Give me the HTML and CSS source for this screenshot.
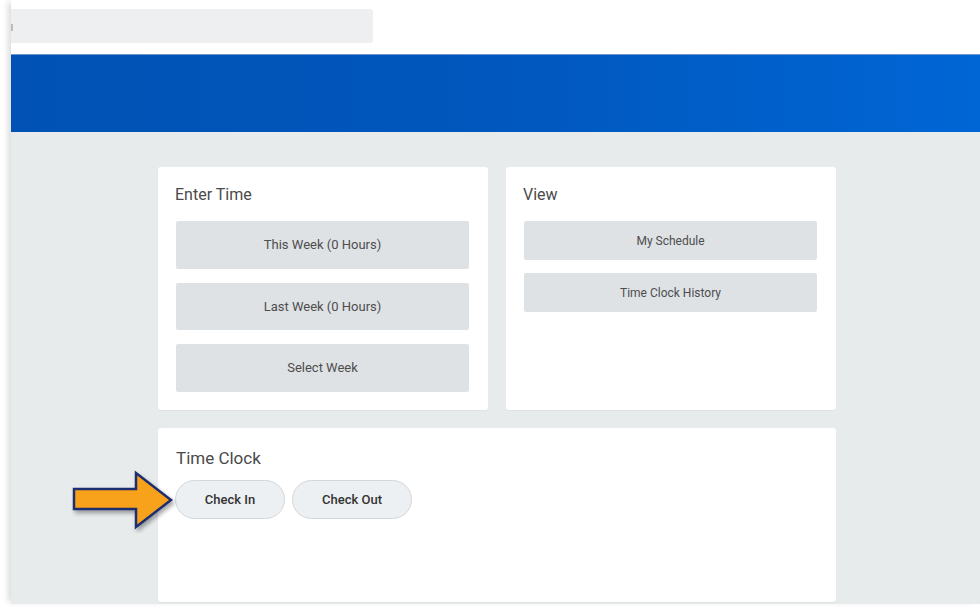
FILE: index.html
```html
<!DOCTYPE html>
<html lang="en">
<head>
<meta charset="utf-8">
<title>Time</title>
<link rel="stylesheet" href="styles.css">
</head>
<body>
<div class="frame">
  <header class="topbar">
    <span class="grip"></span>
    <div class="search"></div>
  </header>
  <div class="banner"></div>
  <main class="content">
    <div class="grid">
      <section class="card">
        <h2 class="card-title">Enter Time</h2>
        <div class="stack loose">
          <button class="tile tall">This Week (0 Hours)</button>
          <button class="tile tall">Last Week (0 Hours)</button>
          <button class="tile tall">Select Week</button>
        </div>
      </section>
      <section class="card">
        <h2 class="card-title">View</h2>
        <div class="stack">
          <button class="tile short">My Schedule</button>
          <button class="tile short">Time Clock History</button>
        </div>
      </section>
      <section class="card wide">
        <h2 class="card-title clock-title">Time Clock</h2>
        <div class="pills">
          <button class="pill check-in">Check In</button>
          <button class="pill">Check Out</button>
        </div>
      </section>
    </div>
    <svg class="pointer" width="110" height="64" viewBox="0 0 110 64" aria-hidden="true">
      <defs>
        <filter id="drop" x="-20%" y="-20%" width="140%" height="150%">
          <feDropShadow dx="2" dy="3" stdDeviation="2" flood-color="#000" flood-opacity="0.35"/>
        </filter>
      </defs>
      <path d="M3 20 H65 V4 L100 31 L65 58 V40 H3 Z" fill="#F8A21A" stroke="#1F2F6E" stroke-width="2.5" stroke-linejoin="miter" filter="url(#drop)"/>
    </svg>
  </main>
</div>
</body>
</html>
```
FILE: styles.css
```css
* { box-sizing: border-box; }

html, body {
  margin: 0;
  padding: 0;
  background: #fff;
  width: 980px;
  height: 607px;
  overflow: hidden;
  font-family: Roboto, "Liberation Sans", Arial, sans-serif;
}

.frame {
  margin-left: 11px;
  height: 604px;
  box-shadow: -5px 0 6px -2px rgba(0, 0, 0, 0.14);
  display: flex;
  flex-direction: column;
  background: #fff;
}

.topbar {
  height: 54px;
  padding-top: 9px;
  position: relative;
  background: #fff;
}

.grip {
  position: absolute;
  left: 0;
  top: 24px;
  width: 2px;
  height: 7px;
  background: #b9bcbf;
}

.search {
  width: 362px;
  height: 34px;
  background: #eeeff1;
  border-radius: 0 3px 3px 0;
}

.banner {
  height: 78px;
  border-top: 1px solid #6f97cf;
  background: linear-gradient(90deg, #0152b4 0%, #0157bd 50%, #0066d5 100%);
}

.content {
  flex: 1;
  background: #e8ebec;
  padding: 35px 0 0 147px;
  position: relative;
}

.grid {
  display: grid;
  grid-template-columns: 330px 330px;
  grid-template-rows: 243px 174px;
  column-gap: 18px;
  row-gap: 18px;
}

.card {
  background: #fff;
  border-radius: 3px;
  padding: 18px 19px 0 18px;
  box-shadow: 0 1px 1px rgba(0, 0, 0, 0.04);
}

.card.wide {
  grid-column: 1 / span 2;
  padding: 20px 18px 0 17px;
}

.card-title {
  margin: 0 0 17px -1px;
  font-size: 16px;
  line-height: 19px;
  font-weight: 400;
  color: #4a4a4a;
}

.clock-title {
  margin: 0 0 12px 1px;
  font-size: 17px;
  line-height: 20px;
}

.stack {
  display: flex;
  flex-direction: column;
  gap: 13px;
}

.stack.loose {
  gap: 14px;
}

.tile {
  display: block;
  width: 293px;
  border: none;
  border-radius: 2px;
  background: #dfe2e5;
  color: #4d4d4d;
  font-family: inherit;
  text-align: center;
  padding: 0;
}

.tile.tall {
  height: 47.5px;
  font-size: 13px;
}

.tile.short {
  height: 39px;
  font-size: 12px;
}

.pills {
  display: flex;
  gap: 7px;
}

.pill {
  height: 39px;
  padding: 0 29px;
  border: 1px solid #d3d7db;
  border-radius: 20px;
  background: #edf0f2;
  color: #333;
  font-family: inherit;
  font-size: 13px;
  font-weight: 500;
}

.pill.check-in {
  width: 110px;
  padding: 0;
}

.pointer {
  position: absolute;
  left: 60px;
  top: 337px;
}
```
